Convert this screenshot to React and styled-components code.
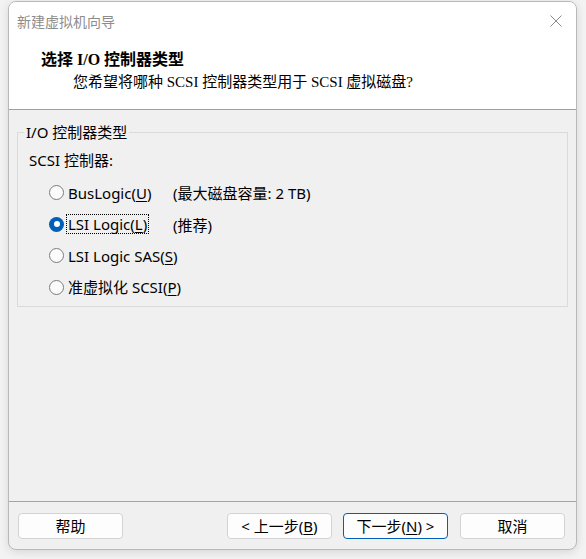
import React from "react";
import styled, { createGlobalStyle } from "styled-components";

const GlobalStyle = createGlobalStyle`
  html, body {
    margin: 0;
    padding: 0;
    background: #f3f3f3;
  }
  body {
    font-family: "Noto Sans", "Noto Sans CJK SC", sans-serif;
    font-size: 15px;
    color: #000;
  }
`;

const Page = styled.div`
  padding: 1px 9px 9px 8px;
`;

const Window = styled.div`
  width: 569px;
  height: 549px;
  box-sizing: border-box;
  border: 1px solid #b9b9b9;
  border-radius: 8px;
  overflow: hidden;
  display: flex;
  flex-direction: column;
  background: #f0f0f0;
  box-shadow: 0 2px 10px rgba(0, 0, 0, 0.12);
`;

const TitleBar = styled.div`
  height: 37px;
  background: #fff;
  display: flex;
  align-items: center;
  justify-content: space-between;
  padding: 0 14px 0 8px;
`;

const TitleText = styled.span`
  font-family: "Noto Sans CJK SC", sans-serif;
  font-size: 14px;
  color: #8c8c8c;
`;

const CloseIcon = () => (
  <svg width="12" height="12" viewBox="0 0 12 12">
    <path d="M0.5 0.5 L11.5 11.5 M11.5 0.5 L0.5 11.5" stroke="#8a8a8a" strokeWidth="1" />
  </svg>
);

const Header = styled.div`
  height: 71px;
  background: #fff;
  border-bottom: 1px solid #a0a0a0;
  display: flex;
  flex-direction: column;
  padding: 10px 0 0 32px;
  box-sizing: border-box;
`;

const HeaderTitle = styled.div`
  font-family: "Liberation Serif", "Noto Sans CJK SC", serif;
  font-weight: bold;
  font-size: 16px;
  line-height: 22px;
`;

const HeaderSub = styled.div`
  font-family: "Liberation Serif", "Noto Sans CJK SC", serif;
  font-size: 15px;
  line-height: 22px;
  padding-left: 32px;
`;

const Content = styled.div`
  flex: 1;
  padding: 12px 8px 0 8px;
`;

const Group = styled.fieldset`
  margin: 0;
  padding: 0 0 8px 0;
  border: 1px solid #dadada;
  border-radius: 0;
`;

const Legend = styled.legend`
  margin-left: 6px;
  padding: 0 2px;
  font-size: 15px;
  line-height: 20px;
`;

const FieldLabel = styled.div`
  line-height: 20px;
  margin: 8px 0 12px 11px;
`;

const Options = styled.div`
  display: grid;
  grid-template-columns: 124px auto;
  row-gap: 10.6px;
  padding-left: 31px;
`;

const Option = styled.label`
  display: flex;
  align-items: center;
  gap: 2px;
  height: 21px;
  white-space: nowrap;
  grid-column: ${(p) => (p.wide ? "span 2" : "auto")};
`;

const Radio = styled.span`
  width: 15px;
  height: 15px;
  box-sizing: border-box;
  border-radius: 50%;
  border: ${(p) => (p.checked ? "none" : "1px solid #7d7d7d")};
  background: ${(p) => (p.checked ? "#005fb8" : "#fbfbfb")};
  display: flex;
  align-items: center;
  justify-content: center;
  flex-shrink: 0;

  &::after {
    content: "";
    display: ${(p) => (p.checked ? "block" : "none")};
    width: 6px;
    height: 6px;
    border-radius: 50%;
    background: #fff;
  }
`;

const OptionText = styled.span`
  line-height: 18px;
  padding: 0 1px;
  border: 1px dotted ${(p) => (p.focused ? "#000" : "transparent")};
`;

const Note = styled.span`
  display: flex;
  align-items: center;
  height: 21px;
  white-space: nowrap;
`;

const Key = styled.u`
  text-underline-offset: 2px;
`;

const Footer = styled.div`
  border-top: 1px solid #a5a5a5;
  display: flex;
  align-items: center;
  padding: 11px 11px 10px 9px;
`;

const Button = styled.button`
  width: 105px;
  height: 26px;
  box-sizing: border-box;
  border: 1px solid ${(p) => (p.primary ? "#005fb8" : "#d3d3d3")};
  border-radius: 4px;
  background: #fdfdfd;
  font-family: "Noto Sans", "Noto Sans CJK SC", sans-serif;
  font-size: 15px;
  color: #000;
  padding: 0;
  margin-left: ${(p) => p.gap || 0}px;
  line-height: 22px;
`;

const Spacer = styled.div`
  flex: 1;
`;

const options = [
  { label: "BusLogic", key: "U", note: "(最大磁盘容量: 2 TB)" },
  { label: "LSI Logic", key: "L", note: "(推荐)", checked: true },
  { label: "LSI Logic SAS", key: "S" },
  { label: "准虚拟化 SCSI", key: "P" },
];

export default function App() {
  return (
    <Page>
      <GlobalStyle />
      <Window>
        <TitleBar>
          <TitleText>新建虚拟机向导</TitleText>
          <CloseIcon />
        </TitleBar>
        <Header>
          <HeaderTitle>选择 I/O 控制器类型</HeaderTitle>
          <HeaderSub>您希望将哪种 SCSI 控制器类型用于 SCSI 虚拟磁盘?</HeaderSub>
        </Header>
        <Content>
          <Group>
            <Legend>I/O 控制器类型</Legend>
            <FieldLabel>SCSI 控制器:</FieldLabel>
            <Options>
              {options.map((o) => (
                <React.Fragment key={o.key}>
                  <Option wide={!o.note}>
                    <Radio checked={o.checked} />
                    <OptionText focused={o.checked}>
                      {o.label}(<Key>{o.key}</Key>)
                    </OptionText>
                  </Option>
                  {o.note && <Note>{o.note}</Note>}
                </React.Fragment>
              ))}
            </Options>
          </Group>
        </Content>
        <Footer>
          <Button>帮助</Button>
          <Spacer />
          <Button>&lt; 上一步(<Key>B</Key>)</Button>
          <Button primary gap={11}>下一步(<Key>N</Key>) &gt;</Button>
          <Button gap={12}>取消</Button>
        </Footer>
      </Window>
    </Page>
  );
}
